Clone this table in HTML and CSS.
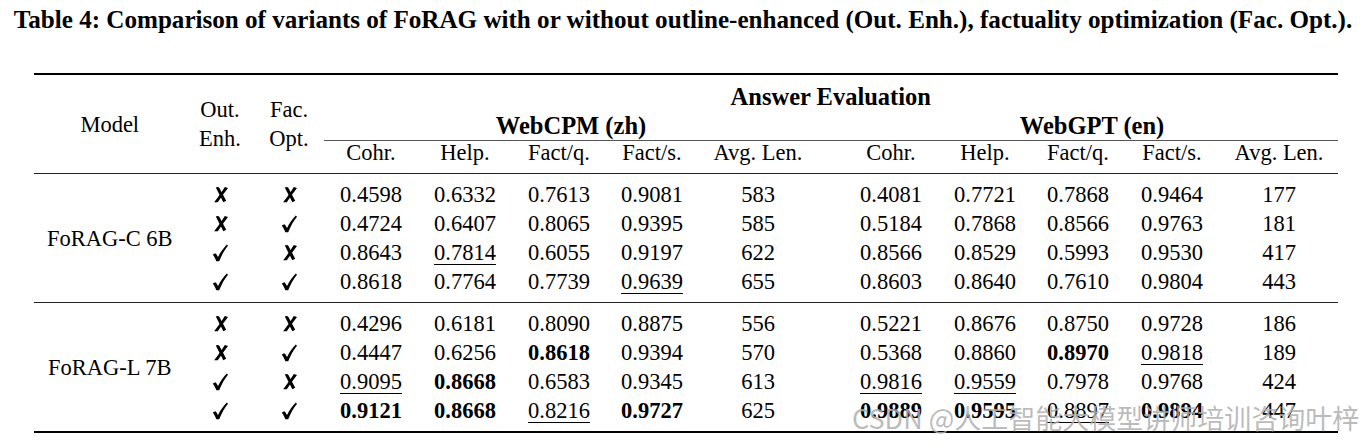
FILE: index.html
```html
<!DOCTYPE html>
<html lang="en">
<head>
<meta charset="utf-8">
<title>Table 4</title>
<link rel="stylesheet" href="styles.css">
</head>
<body>
<svg class="defs" width="0" height="0" aria-hidden="true">
  <symbol id="xx" viewBox="0 0 16 18">
    <path d="M3 1.6C4 0.7 5.9 0.6 6.7 1.7L14.1 15.6L11 17.3C8.6 12.6 5.9 7.4 3 1.6Z"/>
    <path d="M12.6 0.9L16 2.1C12.2 7 8.6 12.2 5.1 17.3L1.2 17.3C5.4 12 9 6.5 12.6 0.9Z"/>
  </symbol>
  <symbol id="ck" viewBox="0 0 16 18">
    <path d="M0.8 10.7C1.9 9.5 3.1 9.1 3.9 9.6L6 12.9C8.4 8.3 11.4 4.3 14.8 0.6L16 1.8C12.7 5.8 9.8 10.8 7.2 17.3L4.4 17.3C3.4 14.6 2.2 12.4 0.8 10.7Z"/>
  </symbol>
</svg>
<div class="page">
  <p class="caption">Table 4: Comparison of variants of FoRAG with or without outline-enhanced (Out. Enh.), factuality optimization (Fac. Opt.).</p>
  <table class="results">
    <colgroup>
      <col class="c-model"><col class="c-out"><col class="c-fac">
      <col class="c-cohr"><col class="c-help"><col class="c-factq"><col class="c-facts"><col class="c-avg">
      <col class="c-cohr2"><col class="c-help2"><col class="c-factq2"><col class="c-facts2"><col class="c-avg2">
    </colgroup>
    <thead>
      <tr class="h1">
        <th rowspan="3" class="model">Model</th>
        <th rowspan="3" class="two">Out.<br>Enh.</th>
        <th rowspan="3" class="two">Fac.<br>Opt.</th>
        <th colspan="10" class="group-title">Answer Evaluation</th>
      </tr>
      <tr class="h2">
        <th colspan="5" class="group-title zh">WebCPM (zh)</th>
        <th colspan="5" class="group-title en">WebGPT (en)</th>
      </tr>
      <tr class="h3">
        <th>Cohr.</th><th>Help.</th><th>Fact/q.</th><th>Fact/s.</th><th>Avg. Len.</th>
        <th class="sep">Cohr.</th><th>Help.</th><th>Fact/q.</th><th>Fact/s.</th><th>Avg. Len.</th>
      </tr>
    </thead>
    <tbody>
      <tr class="first">
        <td rowspan="4" class="model">FoRAG-C 6B</td>
        <td class="mark"><svg class="ico x"><use href="#xx"/></svg></td><td class="mark"><svg class="ico x"><use href="#xx"/></svg></td>
        <td>0.4598</td><td>0.6332</td><td>0.7613</td><td>0.9081</td><td>583</td>
        <td class="sep">0.4081</td><td>0.7721</td><td>0.7868</td><td>0.9464</td><td>177</td>
      </tr>
      <tr>
        <td class="mark"><svg class="ico x"><use href="#xx"/></svg></td><td class="mark"><svg class="ico c"><use href="#ck"/></svg></td>
        <td>0.4724</td><td>0.6407</td><td>0.8065</td><td>0.9395</td><td>585</td>
        <td class="sep">0.5184</td><td>0.7868</td><td>0.8566</td><td>0.9763</td><td>181</td>
      </tr>
      <tr>
        <td class="mark"><svg class="ico c"><use href="#ck"/></svg></td><td class="mark"><svg class="ico x"><use href="#xx"/></svg></td>
        <td>0.8643</td><td><span class="ul">0.7814</span></td><td>0.6055</td><td>0.9197</td><td>622</td>
        <td class="sep">0.8566</td><td>0.8529</td><td>0.5993</td><td>0.9530</td><td>417</td>
      </tr>
      <tr class="end">
        <td class="mark"><svg class="ico c"><use href="#ck"/></svg></td><td class="mark"><svg class="ico c"><use href="#ck"/></svg></td>
        <td>0.8618</td><td>0.7764</td><td>0.7739</td><td><span class="ul">0.9639</span></td><td>655</td>
        <td class="sep">0.8603</td><td>0.8640</td><td>0.7610</td><td>0.9804</td><td>443</td>
      </tr>
    </tbody>
    <tbody>
      <tr class="first">
        <td rowspan="4" class="model">FoRAG-L 7B</td>
        <td class="mark"><svg class="ico x"><use href="#xx"/></svg></td><td class="mark"><svg class="ico x"><use href="#xx"/></svg></td>
        <td>0.4296</td><td>0.6181</td><td>0.8090</td><td>0.8875</td><td>556</td>
        <td class="sep">0.5221</td><td>0.8676</td><td>0.8750</td><td>0.9728</td><td>186</td>
      </tr>
      <tr>
        <td class="mark"><svg class="ico x"><use href="#xx"/></svg></td><td class="mark"><svg class="ico c"><use href="#ck"/></svg></td>
        <td>0.4447</td><td>0.6256</td><td><b>0.8618</b></td><td>0.9394</td><td>570</td>
        <td class="sep">0.5368</td><td>0.8860</td><td><b>0.8970</b></td><td><span class="ul">0.9818</span></td><td>189</td>
      </tr>
      <tr>
        <td class="mark"><svg class="ico c"><use href="#ck"/></svg></td><td class="mark"><svg class="ico x"><use href="#xx"/></svg></td>
        <td><span class="ul">0.9095</span></td><td><b>0.8668</b></td><td>0.6583</td><td>0.9345</td><td>613</td>
        <td class="sep"><span class="ul">0.9816</span></td><td><span class="ul">0.9559</span></td><td>0.7978</td><td>0.9768</td><td>424</td>
      </tr>
      <tr class="end">
        <td class="mark"><svg class="ico c"><use href="#ck"/></svg></td><td class="mark"><svg class="ico c"><use href="#ck"/></svg></td>
        <td><b>0.9121</b></td><td><b>0.8668</b></td><td><span class="ul">0.8216</span></td><td><b>0.9727</b></td><td>625</td>
        <td class="sep"><b>0.9889</b></td><td><b>0.9595</b></td><td><span class="ul">0.8897</span></td><td><b>0.9894</b></td><td>447</td>
      </tr>
    </tbody>
  </table>
  <div class="watermark">CSDN @人工智能大模型讲师培训咨询叶梓</div>
</div>
</body>
</html>
```

FILE: styles.css
```css
html, body {
  margin: 0;
  padding: 0;
  background: #fff;
}

.defs {
  position: absolute;
  width: 0;
  height: 0;
  overflow: hidden;
}

.page {
  position: relative;
  width: 1366px;
  height: 446px;
  overflow: hidden;
  font-family: "Liberation Serif", "Times New Roman", serif;
  color: #000;
}

.caption {
  margin: 0;
  padding-top: 5px;
  font-size: 25.1px;
  line-height: 30px;
  font-weight: bold;
  text-align: center;
  white-space: nowrap;
}

.results {
  margin: 38px 0 0 34px;
  width: 1304px;
  table-layout: fixed;
  border-collapse: collapse;
  border-top: 2px solid #000;
  border-bottom: 2px solid #000;
  font-size: 22.5px;
}

.c-model { width: 151.5px; }
.c-out { width: 69px; }
.c-fac { width: 69px; }
.c-cohr { width: 95px; }
.c-help { width: 93px; }
.c-factq { width: 95px; }
.c-facts { width: 91px; }
.c-avg { width: 121px; }
.c-cohr2 { width: 119.5px; }
.c-help2 { width: 94px; }
.c-factq2 { width: 92px; }
.c-facts2 { width: 96px; }
.c-avg2 { width: 118px; }

.results th,
.results td {
  padding: 0;
  text-align: center;
  vertical-align: middle;
  white-space: nowrap;
  font-weight: normal;
  line-height: 29px;
}

.results .sep {
  padding-left: 25.5px;
}

.h1 th.group-title {
  padding-top: 7px;
}

.results th.group-title {
  font-weight: bold;
  font-size: 24.5px;
}

.h2 th {
  border-bottom: 1px solid #555;
}

.h2 th.en {
  padding-left: 27.5px;
}

.h3 th {
  line-height: 24px;
  padding-bottom: 8px;
}

.results tbody {
  border-top: 1px solid #222;
}

.results tr.first td {
  padding-top: 6px;
}

.results tr.first td.model {
  padding-top: 0;
}

.results tr.end td {
  padding-bottom: 6px;
}

.results td.mark {
  line-height: 0;
  height: 29px;
}

.ico {
  display: inline-block;
  vertical-align: middle;
  fill: #000;
}

.ico.x {
  width: 15px;
  height: 17px;
}

.ico.c {
  width: 16px;
  height: 18px;
}

.ul {
  text-decoration: underline;
  text-decoration-thickness: 1px;
  text-underline-offset: 4px;
}

.watermark {
  position: absolute;
  left: 852px;
  top: 404px;
  font-family: "Noto Sans CJK SC", "DejaVu Sans", sans-serif;
  font-size: 27px;
  line-height: 27px;
  white-space: nowrap;
  color: rgba(175, 175, 175, 0.85);
}
```
